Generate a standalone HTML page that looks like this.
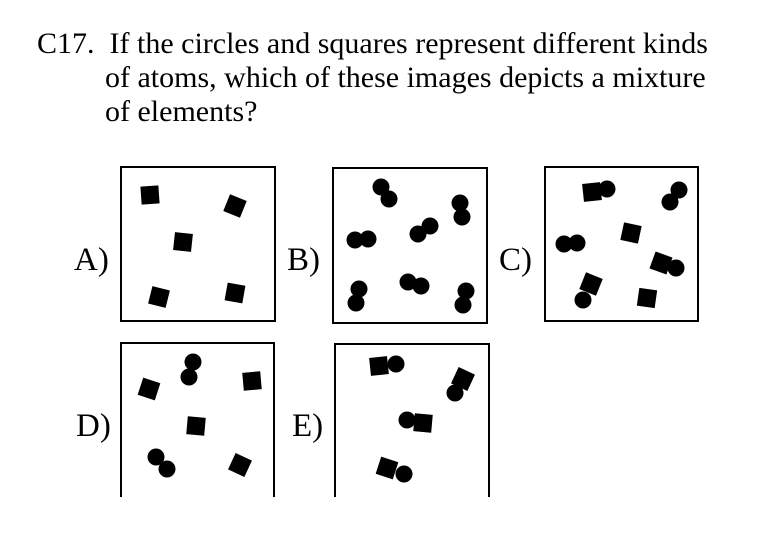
<!DOCTYPE html>
<html><head><style>
body{margin:0;width:780px;height:547px;background:#fff;overflow:hidden;font-family:"Liberation Serif",serif;}
.t{position:absolute;font-size:30px;color:#000;white-space:nowrap;}
</style></head><body>
<div class="t" style="left:37px;top:27px;">C17.&nbsp; If the circles and squares represent different kinds</div>
<div class="t" style="left:105px;top:61px;">of atoms, which of these images depicts a mixture</div>
<div class="t" style="left:105px;top:95px;">of elements?</div>
<svg width="780" height="547" style="position:absolute;left:0;top:0" font-family="Liberation Serif, serif" font-size="33">
<g fill="none" stroke="#000" stroke-width="2">
<rect x="121" y="167" width="154" height="154"/>
<rect x="333" y="168" width="154" height="155"/>
<rect x="545" y="167" width="153" height="154"/>
<path d="M121 497V343H274V497"/>
<path d="M335 497V344H489V497"/>
</g>
<text x="74" y="270">A)</text>
<text x="287" y="270">B)</text>
<text x="499" y="270">C)</text>
<text x="76" y="436">D)</text>
<text x="292" y="436">E)</text>
<g fill="#000">
<!-- A -->
<rect x="-9" y="-9" width="18" height="18" transform="translate(150,195) rotate(-4)"/>
<rect x="-9" y="-9" width="18" height="18" transform="translate(235,206) rotate(22)"/>
<rect x="-9" y="-9" width="18" height="18" transform="translate(183,242) rotate(6)"/>
<rect x="-9" y="-9" width="18" height="18" transform="translate(159,297) rotate(14)"/>
<rect x="-9" y="-9" width="18" height="18" transform="translate(235,293) rotate(10)"/>
<!-- B -->
<circle cx="381" cy="187" r="8.5"/><circle cx="389" cy="199" r="8.5"/>
<circle cx="460" cy="203" r="8.5"/><circle cx="462" cy="217" r="8.5"/>
<circle cx="355" cy="240" r="8.5"/><circle cx="368" cy="239" r="8.5"/>
<circle cx="418" cy="234" r="8.5"/><circle cx="430" cy="226" r="8.5"/>
<circle cx="359" cy="289" r="8.5"/><circle cx="356" cy="303" r="8.5"/>
<circle cx="408" cy="282" r="8.5"/><circle cx="421" cy="286" r="8.5"/>
<circle cx="466" cy="291" r="8.5"/><circle cx="463" cy="305" r="8.5"/>
<!-- C -->
<rect x="-9" y="-9" width="18" height="18" transform="translate(592,192) rotate(-6)"/><circle cx="607" cy="189" r="8.5"/>
<circle cx="679" cy="190" r="8.5"/><circle cx="670" cy="202" r="8.5"/>
<rect x="-9" y="-9" width="18" height="18" transform="translate(631,233) rotate(12)"/>
<circle cx="564" cy="244" r="8.5"/><circle cx="577" cy="243" r="8.5"/>
<rect x="-9" y="-9" width="18" height="18" transform="translate(661,263) rotate(20)"/><circle cx="676" cy="268" r="8.5"/>
<rect x="-9" y="-9" width="18" height="18" transform="translate(591,284) rotate(22)"/><circle cx="583" cy="300" r="8.5"/>
<rect x="-9" y="-9" width="18" height="18" transform="translate(647,298) rotate(8)"/>
<!-- D -->
<circle cx="193" cy="362" r="8.5"/><circle cx="189" cy="377" r="8.5"/>
<rect x="-9" y="-9" width="18" height="18" transform="translate(149,389) rotate(18)"/>
<rect x="-9" y="-9" width="18" height="18" transform="translate(252,381) rotate(-5)"/>
<rect x="-9" y="-9" width="18" height="18" transform="translate(196,426) rotate(5)"/>
<circle cx="156" cy="457" r="8.5"/><circle cx="167" cy="469" r="8.5"/>
<rect x="-9" y="-9" width="18" height="18" transform="translate(240,465) rotate(25)"/>
<!-- E -->
<rect x="-9" y="-9" width="18" height="18" transform="translate(379,366) rotate(-6)"/><circle cx="396" cy="364" r="8.5"/>
<rect x="-9" y="-9" width="18" height="18" transform="translate(463,379) rotate(25)"/><circle cx="455" cy="393" r="8.5"/>
<circle cx="407" cy="420" r="8.5"/><rect x="-9" y="-9" width="18" height="18" transform="translate(423,423) rotate(5)"/>
<rect x="-9" y="-9" width="18" height="18" transform="translate(387,468) rotate(18)"/><circle cx="404" cy="474" r="8.5"/>
</g>
</svg>
</body></html>
